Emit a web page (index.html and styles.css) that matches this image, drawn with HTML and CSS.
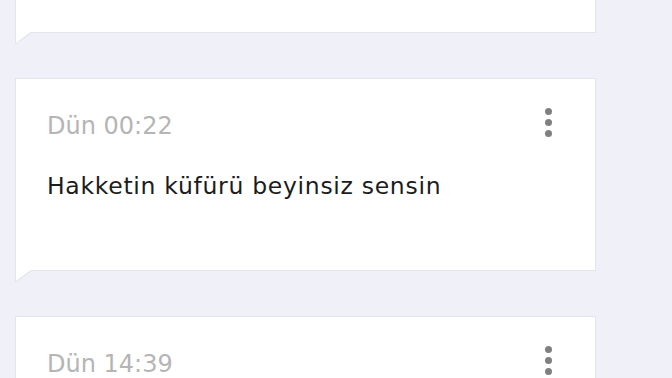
FILE: index.html
```html
<!DOCTYPE html>
<html lang="tr">
<head>
<meta charset="utf-8">
<link rel="stylesheet" href="styles.css">
</head>
<body>
<div class="feed">
  <div class="card first"></div>
  <div class="card">
    <div class="card-head">
      <span class="time">Dün 00:22</span>
      <span class="dots"><i></i><i></i><i></i></span>
    </div>
    <p class="msg">Hakketin küfürü beyinsiz sensin</p>
  </div>
  <div class="card">
    <div class="card-head">
      <span class="time">Dün 14:39</span>
      <span class="dots"><i></i><i></i><i></i></span>
    </div>
  </div>
</div>
</body>
</html>
```
FILE: styles.css
```css
html, body {
  margin: 0;
  padding: 0;
  background: #f0f0f9;
  overflow: hidden;
  height: 378px;
}
body {
  font-family: "DejaVu Sans", "Noto Sans", sans-serif;
}
.feed {
  display: flex;
  flex-direction: column;
  gap: 45px;
  padding-left: 15px;
  width: 581px;
}
.card {
  position: relative;
  box-sizing: border-box;
  height: 193px;
  background: #ffffff;
  border: 1px solid #e4e4ec;
  padding: 32px 43px 0 31px;
}
.card.first {
  margin-top: -160px;
}
.card::before,
.card::after {
  content: "";
  position: absolute;
  top: 100%;
  width: 18px;
  height: 13px;
  clip-path: polygon(0 0, 100% 0, 0 100%);
}
.card::before {
  left: -1px;
  background: #e4e4ec;
}
.card::after {
  left: 0;
  top: calc(100% - 1px);
  width: 16px;
  height: 12px;
  background: #ffffff;
}
.card-head {
  display: flex;
  justify-content: space-between;
  align-items: flex-start;
}
.time {
  font-size: 24px;
  line-height: 30px;
  color: #b5b5b5;
}
.dots {
  display: flex;
  flex-direction: column;
  gap: 4px;
  margin-top: -3px;
}
.dots i {
  display: block;
  width: 7px;
  height: 7px;
  border-radius: 50%;
  background: #808080;
}
.msg {
  margin: 30px 0 0;
  font-size: 23.5px;
  letter-spacing: 0.7px;
  line-height: 30px;
  color: #1c1c1c;
}
```
